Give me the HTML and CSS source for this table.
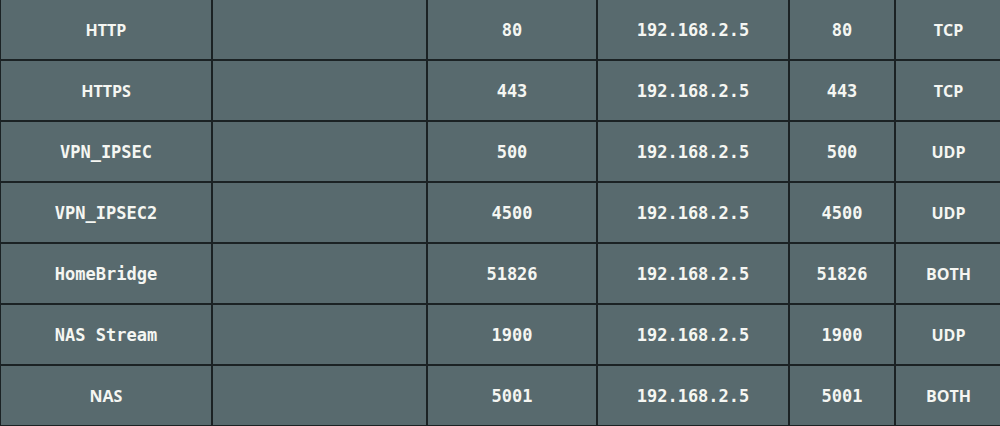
FILE: index.html
```html
<!DOCTYPE html>
<html>
<head>
<meta charset="utf-8">
<link rel="stylesheet" href="styles.css">
</head>
<body>
<table class="rules">
  <colgroup>
    <col class="c-name"><col class="c-range"><col class="c-ext"><col class="c-ip"><col class="c-int"><col class="c-proto">
  </colgroup>
  <tbody>
    <tr><td class="sans">HTTP</td><td></td><td>80</td><td>192.168.2.5</td><td>80</td><td class="sans">TCP</td></tr>
    <tr><td class="sans">HTTPS</td><td></td><td>443</td><td>192.168.2.5</td><td>443</td><td class="sans">TCP</td></tr>
    <tr><td>VPN_IPSEC</td><td></td><td>500</td><td>192.168.2.5</td><td>500</td><td class="sans">UDP</td></tr>
    <tr><td>VPN_IPSEC2</td><td></td><td>4500</td><td>192.168.2.5</td><td>4500</td><td class="sans">UDP</td></tr>
    <tr><td>HomeBridge</td><td></td><td>51826</td><td>192.168.2.5</td><td>51826</td><td class="sans">BOTH</td></tr>
    <tr><td>NAS Stream</td><td></td><td>1900</td><td>192.168.2.5</td><td>1900</td><td class="sans">UDP</td></tr>
    <tr><td class="sans">NAS</td><td></td><td>5001</td><td>192.168.2.5</td><td>5001</td><td class="sans">BOTH</td></tr>
  </tbody>
</table>
</body>
</html>
```
FILE: styles.css
```css
html, body {
  margin: 0;
  padding: 0;
  background: #586a6e;
  overflow: hidden;
  height: 426px;
}
.rules {
  border-collapse: collapse;
  table-layout: fixed;
  width: 1002px;
  margin: -2px 0 0 -1px;
}
.c-name { width: 212px; }
.c-range { width: 215px; }
.c-ext { width: 170px; }
.c-ip { width: 192px; }
.c-int { width: 106px; }
.c-proto { width: 107px; }
.rules td {
  border: 2px solid #1b2224;
  height: 59px;
  padding: 0;
  text-align: center;
  vertical-align: middle;
  color: #f5f6f2;
  font-family: "DejaVu Sans Mono", monospace;
  font-weight: bold;
  font-size: 17px;
}
.rules td.sans {
  font-family: "Open Sans", sans-serif;
  font-weight: 700;
  font-size: 16px;
}
```
